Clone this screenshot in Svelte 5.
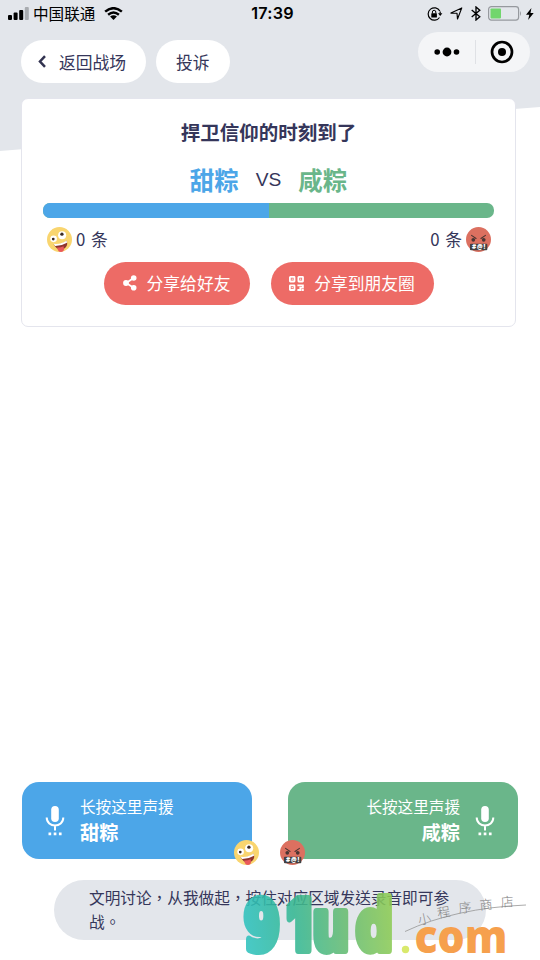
<script lang="ts">
	interface Side {
		name: string;
		count: number;
		tone: 'sweet' | 'salty';
	}

	const sides: Side[] = [
		{ name: '甜粽', count: 0, tone: 'sweet' },
		{ name: '咸粽', count: 0, tone: 'salty' }
	];

	const total = sides[0].count + sides[1].count;
	// an empty battle is drawn as a tie
	const share = total === 0 ? 50 : (sides[0].count / total) * 100;
</script>

{#snippet face(tone: Side['tone'])}
	<svg class="face" viewBox="0 0 36 36" aria-hidden="true">
		{#if tone === 'sweet'}
			<circle cx="18" cy="18" r="18" fill="#f9d56f" />
			<circle cx="9.5" cy="17" r="4.8" fill="#fff" />
			<circle cx="21.8" cy="11.8" r="5.8" fill="#fff" />
			<circle cx="9" cy="17.3" r="2" fill="#3c2b25" />
			<circle cx="21.5" cy="10.3" r="2.4" fill="#3c2b25" />
			<path d="M9.5 24.5 Q20 26.5 28.5 19.5 Q31 29 22.5 32.5 Q14 34 9.5 24.5Z" fill="#8f352d" />
			<path d="M9.5 24.2 Q20 25.5 28.3 19.4 L28.8 22.6 Q20 27.7 11.5 27.5Z" fill="#fff" />
			<path d="M14.5 29.5 Q19 30 23.8 27.8 L24.5 32 Q24 36 20 36 Q16.5 36 15.7 33Z" fill="#e9595b" />
		{:else}
			<circle cx="18" cy="18" r="18" fill="#dc7060" />
			<circle cx="10.5" cy="18.5" r="2.7" fill="#493532" />
			<circle cx="25.5" cy="18.5" r="2.7" fill="#493532" />
			<path d="M8 12 L14.5 16.5 M28 12 L21.5 16.5" stroke="#493532" stroke-width="1.5" stroke-linecap="round" />
			<rect x="5.7" y="24" width="25" height="9.5" rx="1.5" fill="#414042" />
			<text x="18.2" y="32" text-anchor="middle" textLength="19">#@!</text>
		{/if}
	</svg>
{/snippet}

{#snippet mic()}
	<svg class="mic" viewBox="0 0 20 30" aria-hidden="true">
		<rect x="6.2" y="0" width="7.6" height="16" rx="3.8" fill="#fff" />
		<path d="M1.7 11.5 C1.7 22 18.3 22 18.3 11.5 M10 19 V24.5" fill="none" stroke="#fff" stroke-width="2" />
		<path d="M3.5 27.8 h2.7 M8.7 27.8 h2.7 M13.9 27.8 h2.7" stroke="#fff" stroke-width="2.7" />
	</svg>
{/snippet}

<div class="page">
	<div class="backdrop"></div>

	<div class="status">
		<div class="carrier">
			<svg width="21" height="13" viewBox="0 0 21 13">
				<rect x="0" y="8" width="4" height="5" rx="1" />
				<rect x="5.6" y="5.5" width="4" height="7.5" rx="1" />
				<rect x="11.2" y="3" width="4" height="10" rx="1" />
				<rect x="16.8" y="0" width="4" height="13" rx="1" fill="#a9acb0" />
			</svg>
			<span>中国联通</span>
			<svg width="19" height="13" viewBox="0 0 20 14">
				<path d="M1 5 Q10 -2.4 19 5 M4.2 8.3 Q10 3.6 15.8 8.3" fill="none" stroke="#000" stroke-width="2.7" />
				<path d="M6.3 10.2 Q10 7.6 13.7 10.2 L10 14Z" />
			</svg>
		</div>
		<time>17:39</time>
		<div class="indicators">
			<svg width="16" height="14" viewBox="0 0 16 14">
				<path d="M12.8 4 A6.2 6.2 0 1 0 12.5 10.5 M13.2 4.5 V6.5" fill="none" stroke="#000" stroke-width="1.2" />
				<path d="M11 6.2 H15.4 L13.2 9Z" />
				<rect x="4.3" y="6.2" width="5.6" height="4.2" rx=".5" />
				<path d="M5.4 6.5 V5 A1.7 1.7 0 0 1 8.8 5 V6.5" fill="none" stroke="#000" />
			</svg>
			<svg width="13" height="13" viewBox="0 0 13 13">
				<path d="M.9 6.1 L11.8 .9 L7.5 12 L7 6.2Z" fill="none" stroke="#000" stroke-width="1.15" stroke-linejoin="round" />
			</svg>
			<svg width="10" height="15" viewBox="0 0 10 15">
				<path d="M.7 4 L8.8 10.8 L5 14 V1 L8.8 4.2 L.7 11" fill="none" stroke="#000" stroke-width="1.35" />
			</svg>
			<svg class="battery" width="34" height="15" viewBox="0 0 34 15">
				<rect x=".6" y=".6" width="30" height="13.5" rx="2.8" fill="none" stroke="#96999e" stroke-width="1.2" />
				<rect x="2.5" y="2.4" width="10.5" height="10" rx=".8" fill="#72d66d" />
				<path d="M32 5 Q34 7.4 32 10Z" fill="#96999e" />
			</svg>
			<svg width="8" height="12" viewBox="0 0 8 12">
				<path d="M5.4 0 L0 6.8 H3.3 L2.1 12 L7.7 5 H4.5Z" />
			</svg>
		</div>
	</div>

	<nav>
		<button class="pill back">
			<svg width="8" height="13" viewBox="0 0 8 13">
				<path d="M7 1.2 L2 6.5 L7 11.8" fill="none" stroke="#323350" stroke-width="2.5" />
			</svg>
			返回战场
		</button>
		<button class="pill">投诉</button>
		<div class="capsule">
			<svg width="26" height="10" viewBox="0 0 26 10">
				<circle cx="3.2" cy="5" r="2.8" />
				<circle cx="13" cy="5" r="4.4" />
				<circle cx="22.5" cy="5" r="2.8" />
			</svg>
			<i></i>
			<svg width="24" height="24" viewBox="0 0 24 24">
				<circle cx="12" cy="12" r="10" fill="none" stroke="#000" stroke-width="2.7" />
				<circle cx="12" cy="12" r="4" />
			</svg>
		</div>
	</nav>

	<section class="card">
		<h1>捍卫信仰的时刻到了</h1>
		<div class="versus">
			<strong class="sweet">{sides[0].name}</strong>
			<span>VS</span>
			<strong class="salty">{sides[1].name}</strong>
		</div>
		<div class="bar"><div class="fill" style="width: {share}%"></div></div>
		<div class="counts">
			<div>{@render face('sweet')}<span>{sides[0].count} 条</span></div>
			<div><span>{sides[1].count} 条</span>{@render face('salty')}</div>
		</div>
		<div class="shares">
			<button class="share">
				<svg width="14" height="16" viewBox="0 0 14 16">
					<path d="M10.6 3.1 L3.2 8 L10.6 12.7" fill="none" stroke="#fff" stroke-width="1.8" />
					<circle cx="10.7" cy="3" r="2.8" fill="#fff" />
					<circle cx="3" cy="8" r="2.9" fill="#fff" />
					<circle cx="10.7" cy="12.7" r="2.8" fill="#fff" />
				</svg>
				分享给好友
			</button>
			<button class="share moments">
				<svg width="15" height="15" viewBox="0 0 15 15" fill="none" stroke="#fff" stroke-width="1.8">
					<rect x=".9" y=".9" width="4.6" height="4.6" rx=".4" />
					<rect x="9.4" y=".9" width="4.6" height="4.6" rx=".4" />
					<rect x=".9" y="9.4" width="4.6" height="4.6" rx=".4" />
					<path d="M8.4 9.4 H13.9 V11.6 H11.3 V14 H8.4 M12.6 14 H14.8" />
					<path d="M2.6 3.2 h1.2 M11.1 3.2 h1.2 M2.6 11.7 h1.2" stroke-width="1.2" />
				</svg>
				分享到朋友圈
			</button>
		</div>
	</section>

	<div class="actions">
		{#each sides as side}
			<div class="record {side.tone}">
				{@render mic()}
				<div class="label">
					<span>长按这里声援</span>
					<strong>{side.name}</strong>
				</div>
				<div class="badge">{@render face(side.tone)}</div>
			</div>
		{/each}
	</div>

	<p class="notice">文明讨论，从我做起，按住对应区域发送录音即可参战。</p>

	<svg class="watermark" width="300" height="80" viewBox="240 880 300 80">
		<defs>
			<linearGradient id="brand" gradientUnits="userSpaceOnUse" x1="0" y1="0" x2="200" y2="-30">
				<stop offset="0" stop-color="#2fc3c2" />
				<stop offset=".35" stop-color="#35b894" />
				<stop offset=".65" stop-color="#62bb75" />
				<stop offset="1" stop-color="#8fcc54" />
			</linearGradient>
		</defs>
		<text class="brand" transform="translate(243 949.5) scale(.75 1)" x="1" fill="url(#brand)" stroke="url(#brand)">9<tspan class="one" x="59">1</tspan><tspan x="92.5 150.5">ud</tspan></text>
		<circle cx="405.5" cy="949.5" r="3.7" fill="#d9e96c" />
		<text class="dotcom" x="414.5" y="953" textLength="93" lengthAdjust="spacingAndGlyphs">com</text>
		<path d="M405 931.5 Q455 908 526 905" fill="none" stroke="#969696" stroke-width=".8" />
		<g class="script">
			<text transform="translate(419 925) rotate(-12)">小</text>
			<text transform="translate(438 918) rotate(-9)">程</text>
			<text transform="translate(459 913) rotate(-6)">序</text>
			<text transform="translate(480 910) rotate(-5)">商</text>
			<text transform="translate(501 907) rotate(-4)">店</text>
		</g>
	</svg>
</div>

<style>
	:global(body) {
		margin: 0;
	}

	.page {
		position: relative;
		box-sizing: border-box;
		width: 540px;
		height: 960px;
		overflow: hidden;
		display: flex;
		flex-direction: column;
		background: #fff;
		color: #35365a;
		font-family: 'Noto Sans CJK SC', sans-serif;
		isolation: isolate;
	}

	svg {
		display: block;
		flex: none;
	}

	button {
		border: 0;
		font: inherit;
		color: inherit;
	}

	/* slanted header colour behind the navigation and the card */
	.backdrop {
		position: absolute;
		z-index: -1;
		inset: 0 0 auto;
		height: 152px;
		background: #e3e6eb;
		clip-path: polygon(0 0, 100% 0, 100% 107px, 0 151px);
	}

	.status {
		display: grid;
		grid-template-columns: 1fr auto 1fr;
		align-items: center;
		height: 27px;
		padding: 0 6px 0 8px;
		color: #000;
	}

	.carrier,
	.indicators {
		display: flex;
		align-items: center;
	}

	.carrier span {
		margin: 0 9px 0 4px;
		font-size: 15.6px;
		line-height: 27px;
	}

	time {
		font: 600 16.2px/27px Inter, sans-serif;
		letter-spacing: 0.2px;
		margin-left: 3px;
	}

	.indicators {
		justify-content: flex-end;
		gap: 7.5px;
	}

	.battery {
		margin-right: -3.5px;
	}

	nav {
		display: flex;
		align-items: center;
		height: 43px;
		margin-top: 13px;
		padding: 0 10px 0 21px;
	}

	.pill {
		display: flex;
		align-items: center;
		justify-content: center;
		width: 73.5px;
		height: 43px;
		padding: 0;
		border-radius: 22px;
		background: #fff;
		font-size: 16.8px;
	}

	.back {
		width: 125px;
		margin-right: 10px;
		gap: 13px;
		padding-right: 3px;
	}

	.capsule {
		display: flex;
		align-items: center;
		justify-content: center;
		gap: 14.5px;
		width: 112px;
		height: 40px;
		margin: -19px 0 0 auto;
		border-radius: 20px;
		background: #f4f5f7;
	}

	.capsule i {
		width: 1px;
		height: 24px;
		background: #dfe1e5;
	}

	.card {
		box-sizing: border-box;
		width: 495px;
		height: 229px;
		margin: 15px 0 0 21px;
		padding: 20px 21px 0;
		border: 1.4px solid #e4e5ed;
		border-radius: 7px;
		background: #fff;
	}

	h1 {
		margin: 0;
		font-size: 19.5px;
		line-height: 26px;
		text-align: center;
		font-weight: 700;
	}

	.versus {
		display: flex;
		align-items: center;
		justify-content: center;
		gap: 17px;
		height: 36px;
		margin-top: 16.5px;
		font-size: 24.5px;
	}

	.versus strong {
		font-weight: 700;
	}

	.versus .sweet {
		color: #4ca6e8;
	}

	.versus .salty {
		color: #6ab68a;
	}

	.versus span {
		font: 19.2px 'Liberation Sans', sans-serif;
	}

	.bar {
		height: 14.5px;
		margin-top: 5.5px;
		border-radius: 7px;
		overflow: hidden;
		background: #6ab68a;
	}

	.fill {
		height: 100%;
		background: #4ca6e8;
	}

	.counts {
		display: flex;
		justify-content: space-between;
		margin-top: 9px;
		padding: 0 3px 0 4px;
		font-size: 16.8px;
		line-height: 25px;
		word-spacing: 2px;
	}

	.counts div {
		display: flex;
		gap: 4px;
	}

	.face {
		width: 25px;
		height: 25px;
	}

	.face text {
		fill: #fff;
		font: 800 9px 'Open Sans', sans-serif;
	}

	.shares {
		display: flex;
		justify-content: center;
		gap: 21px;
		margin-top: 10px;
	}

	.share {
		display: flex;
		align-items: center;
		justify-content: center;
		gap: 10px;
		width: 146px;
		height: 43px;
		padding: 0;
		border-radius: 22px;
		background: #ed6b66;
		color: #fff;
		font-size: 16.8px;
	}

	.moments {
		width: 163px;
	}

	.actions {
		display: flex;
		gap: 36px;
		margin: 455px 22px 0;
	}

	.record {
		position: relative;
		box-sizing: border-box;
		display: flex;
		align-items: center;
		gap: 15px;
		width: 230px;
		height: 77px;
		padding: 0 23px;
		border-radius: 17px;
		background: #4ca6e8;
		color: #fff;
	}

	.record.salty {
		flex-direction: row-reverse;
		background: #6ab68a;
		text-align: right;
	}

	.mic {
		width: 20px;
		height: 30px;
	}

	.label {
		display: flex;
		flex-direction: column;
		padding-bottom: 1px;
		font-size: 15.6px;
		line-height: 25px;
	}

	.label strong {
		font-size: 19.3px;
		font-weight: 700;
		line-height: 27px;
	}

	.badge {
		position: absolute;
		right: -7px;
		bottom: -6px;
	}

	.salty .badge {
		right: auto;
		left: -8px;
	}

	.notice {
		box-sizing: border-box;
		width: 432px;
		height: 60px;
		margin: 21px 0 0 54px;
		padding: 6px 35px;
		border-radius: 30px;
		background: #e3e6eb;
		font-family: 'Noto Sans CJK TC', sans-serif;
		font-size: 15.67px;
		line-height: 23.5px;
		word-break: break-all;
	}

	.watermark {
		position: absolute;
		right: 0;
		bottom: 0;
	}

	.brand {
		opacity: 0.88;
		font: 700 70px 'DejaVu Sans', sans-serif;
		stroke-width: 8px;
		stroke-linejoin: round;
	}

	.one {
		font-family: Inter, sans-serif;
		font-weight: 900;
	}

	.dotcom {
		fill: #f6a04d;
		font: 800 46px 'Open Sans', sans-serif;
	}

	.script {
		fill: #858585;
		font: 300 13px 'Noto Sans CJK SC', sans-serif;
	}
</style>
